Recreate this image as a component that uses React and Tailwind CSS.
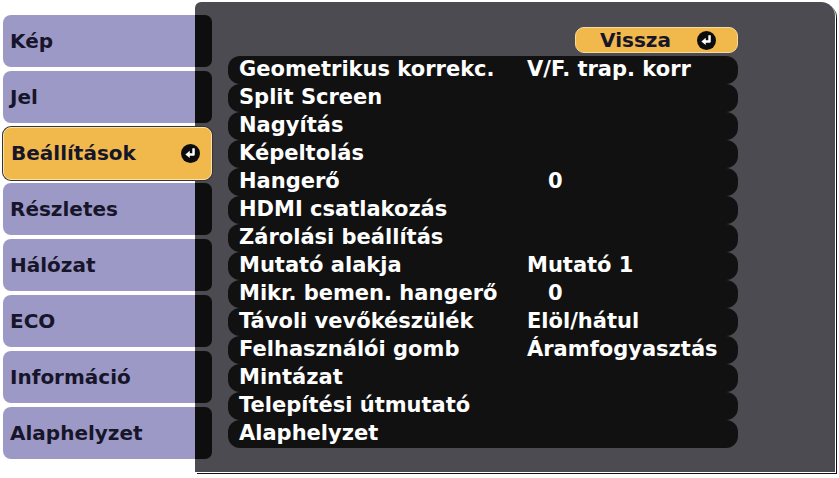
import React from 'react';

const tabs = ['Kép', 'Jel', 'Beállítások', 'Részletes', 'Hálózat', 'ECO', 'Információ', 'Alaphelyzet'];

const rows = [
  ['Geometrikus korrekc.', 'V/F. trap. korr'],
  ['Split Screen', ''],
  ['Nagyítás', ''],
  ['Képeltolás', ''],
  ['Hangerő', '0', true],
  ['HDMI csatlakozás', ''],
  ['Zárolási beállítás', ''],
  ['Mutató alakja', 'Mutató 1'],
  ['Mikr. bemen. hangerő', '0', true],
  ['Távoli vevőkészülék', 'Elöl/hátul'],
  ['Felhasználói gomb', 'Áramfogyasztás'],
  ['Mintázat', ''],
  ['Telepítési útmutató', ''],
  ['Alaphelyzet', ''],
];

function EnterIcon({ size = 19 }) {
  return (
    <svg width={size} height={size} viewBox="0 0 20 20">
      <circle cx="10" cy="10" r="10" fill="#0c0c0c" />
      <path d="M13.2 4.6 V11 H8" stroke="#fff" strokeWidth="2.6" fill="none" strokeLinejoin="round" />
      <path d="M4.6 11 L9.2 7.2 L9.2 14.8 Z" fill="#fff" />
    </svg>
  );
}

export default function App() {
  const font = { fontFamily: '"DejaVu Sans", "Liberation Sans", sans-serif' };
  return (
    <div className="w-[839px] h-[478px] bg-white overflow-hidden" style={font}>
      <div className="grid w-[839px] h-[478px]">
        {/* dark panel */}
        <div className="col-start-1 row-start-1 ml-[195px] mt-[2px] w-[640px] h-[470px] bg-[#4b4b51] rounded-tr-[14px] rounded-tl-[6px] shadow-[1px_1px_0_0_#fff,2px_2px_0_0_#111] flex flex-col pl-[33px] pt-[25px]">
          <div className="w-[510px] flex flex-col">
            <div className="self-end w-[163px] h-[26px] mb-[3px] bg-[#f1b94c] border border-[#f8dc9a] rounded-[9px] flex items-center pl-[24px] pr-[21px] justify-between">
              <span className="text-[20px] font-bold text-[#17152a] leading-none">Vissza</span>
              <EnterIcon />
            </div>
            {rows.map(([label, value, indent], i) => (
              <div key={i} className="h-[28px] bg-[#111111] rounded-[12px] flex items-center pl-[11px] pb-[1px] text-white text-[21px] font-bold leading-none">
                <span className="w-[288px] whitespace-nowrap">{label}</span>
                <span className={indent ? 'pl-[21px] whitespace-nowrap' : 'whitespace-nowrap'}>{value}</span>
              </div>
            ))}
          </div>
        </div>

        {/* left tabs */}
        <div className="col-start-1 row-start-1 pt-[15px] pl-[3px] flex flex-col gap-[4px] w-[212px]">
          {tabs.map((t) =>
            t === 'Beállítások' ? (
              <div key={t} className="h-[53px] -my-[0.5px] w-[209px] bg-[#f1b94c] rounded-[8px] border border-[#fbe3a6] shadow-[0_0_0_1px_#333] flex items-center justify-between pl-[7px] pr-[11px]">
                <span className="text-[20px] font-bold text-[#17152a] leading-none">{t}</span>
                <EnterIcon />
              </div>
            ) : (
              <div key={t} className="h-[52px] flex">
                <div className="w-[192px] bg-[#9d99c6] rounded-l-[8px] flex items-center pl-[7px]">
                  <span className="text-[20px] font-bold text-[#17152a] leading-none">{t}</span>
                </div>
                <div className="w-[17px] bg-[#0e0e0e] rounded-r-[7px]" />
              </div>
            )
          )}
        </div>
      </div>
    </div>
  );
}
